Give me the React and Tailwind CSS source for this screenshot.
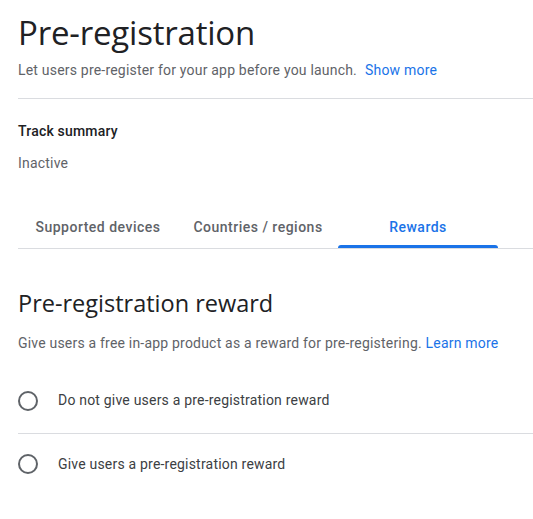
import { useState } from 'react'

const tabs = ['Supported devices', 'Countries / regions', 'Rewards']

function Radio({ label, checked, onChange, height }) {
  return (
    <label className={`flex items-center ${height} cursor-pointer`}>
      <span className="w-[20px] h-[20px] rounded-full border-2 border-[#5f6368] flex items-center justify-center shrink-0">
        {checked && <span className="w-[10px] h-[10px] rounded-full bg-[#1a73e8]" />}
      </span>
      <input type="radio" className="hidden" checked={checked} onChange={onChange} />
      <span className="ml-[20px] text-[14px] tracking-[0.2px] text-[#3c4043]">{label}</span>
    </label>
  )
}

export default function App() {
  const [tab, setTab] = useState(2)
  const [reward, setReward] = useState(null)

  return (
    <div className="bg-white min-h-[519px] pl-[18px] pt-[13px] font-['Roboto',sans-serif] text-[#3c4043]">
      {/* Header */}
      <h1 className="font-['Open_Sans',sans-serif] text-[33px] leading-[40px] text-[#202124] tracking-[-0.2px]">
        Pre-registration
      </h1>
      <p className="text-[14px] tracking-[0.2px] mt-[7px] leading-[20px] text-[#5f6368]">
        Let users pre-register for your app before you launch.
        <a href="#" className="ml-[8px] text-[#1a73e8]">Show more</a>
      </p>
      <div className="border-b border-[#dadce0] mt-[18px]" />

      {/* Track summary */}
      <div className="mt-[22px] text-[14px] tracking-[0.2px] font-medium text-[#202124] leading-[20px]">Track summary</div>
      <div className="mt-[12px] text-[14px] tracking-[0.2px] leading-[20px] text-[#5f6368]">Inactive</div>

      {/* Tabs */}
      <div className="flex mt-[40px] border-b border-[#dadce0]">
        {tabs.map((t, i) => (
          <button
            key={t}
            onClick={() => setTab(i)}
            className={`relative w-[160px] h-[35px] text-[14px] tracking-[0.5px] font-medium pb-[7px] ${
              tab === i ? 'text-[#1a73e8]' : 'text-[#5f6368]'
            }`}
          >
            {t}
            {tab === i && (
              <span className="absolute left-0 right-0 bottom-0 h-[3px] rounded-t-[3px] bg-[#1a73e8]" />
            )}
          </button>
        ))}
      </div>

      {/* Reward section */}
      <h2 className="mt-[38px] font-['Open_Sans',sans-serif] text-[23.5px] leading-[32px] text-[#202124]">
        Pre-registration reward
      </h2>
      <p className="mt-[14px] text-[14px] tracking-[0.2px] leading-[20px] text-[#5f6368]">
        Give users a free in-app product as a reward for pre-registering.{' '}
        <a href="#" className="text-[#1a73e8]">Learn more</a>
      </p>

      <div className="mt-[15px]">
        <Radio height="h-[65px]" label="Do not give users a pre-registration reward" checked={reward === 0} onChange={() => setReward(0)} />
        <div className="border-b border-[#dadce0]" />
        <Radio height="h-[60px]" label="Give users a pre-registration reward" checked={reward === 1} onChange={() => setReward(1)} />
      </div>
    </div>
  )
}
